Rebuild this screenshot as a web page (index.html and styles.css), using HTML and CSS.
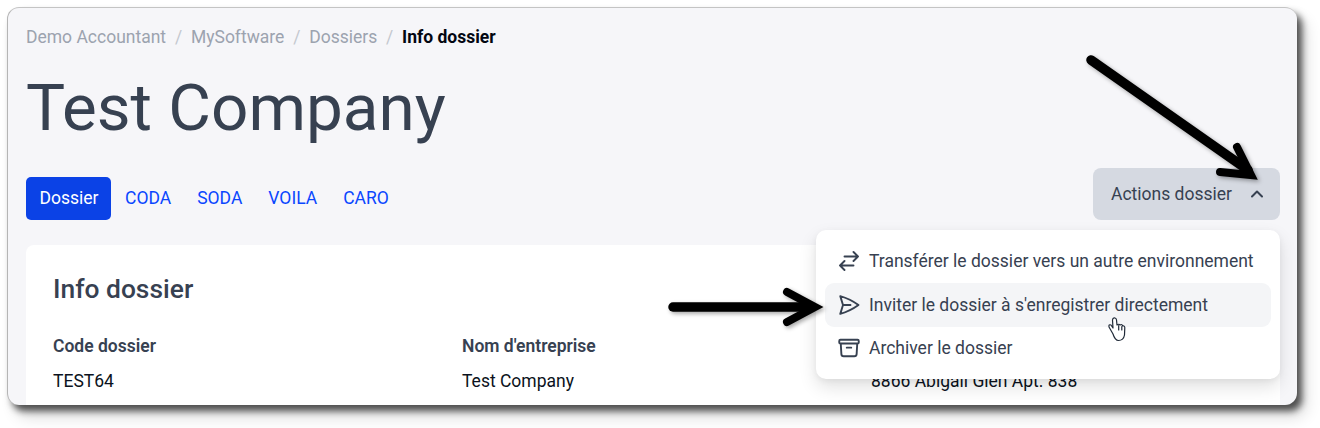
FILE: index.html
```html
<!DOCTYPE html>
<html lang="fr">
<head>
<meta charset="utf-8">
<title>Info dossier</title>
<link rel="stylesheet" href="styles.css">
</head>
<body>
<div class="window">
  <nav class="crumbs">
    <span>Demo Accountant</span><i>/</i><span>MySoftware</span><i>/</i><span>Dossiers</span><i>/</i><b>Info dossier</b>
  </nav>
  <h1 class="title">Test Company</h1>
  <div class="toolbar">
    <div class="tabs">
      <a class="tab active">Dossier</a><a class="tab">CODA</a><a class="tab">SODA</a><a class="tab">VOILA</a><a class="tab">CARO</a>
    </div>
    <button class="actions">Actions dossier
      <svg class="chev" viewBox="0 0 24 24"><path d="m4.5 15.75 7.5-7.5 7.5 7.5"/></svg>
    </button>
  </div>
  <section class="card">
    <h2>Info dossier</h2>
    <div class="grid">
      <div><h3>Code dossier</h3><p>TEST64</p></div>
      <div><h3>Nom d'entreprise</h3><p>Test Company</p></div>
      <div><h3></h3><p>8866 Abigail Glen Apt. 838</p></div>
    </div>
  </section>
  <div class="menu">
    <div class="item"><svg viewBox="0 0 24 24"><path d="M7.5 21 3 16.5m0 0L7.5 12M3 16.5h13.5m0-13.5L21 7.5m0 0L16.5 12M21 7.5H7.5"/></svg>Transférer le dossier vers un autre environnement</div>
    <div class="item hover"><svg viewBox="0 0 24 24"><path d="M6 12 3.269 3.125A59.769 59.769 0 0 1 21.485 12 59.768 59.768 0 0 1 3.27 20.875L5.999 12Zm0 0h7.5"/></svg>Inviter le dossier à s'enregistrer directement</div>
    <div class="item"><svg viewBox="0 0 24 24"><path d="m20.25 7.5-.625 10.632a2.25 2.25 0 0 1-2.247 2.118H6.622a2.25 2.25 0 0 1-2.247-2.118L3.75 7.5m6 4.125h4.5M3.375 7.5h17.25c.621 0 1.125-.504 1.125-1.125v-1.5c0-.621-.504-1.125-1.125-1.125H3.375c-.621 0-1.125.504-1.125 1.125v1.5c0 .621.504 1.125 1.125 1.125Z"/></svg>Archiver le dossier</div>
  </div>
</div>
<svg class="overlay" viewBox="0 0 1320 428">
  <g class="arrow">
    <path class="shaft" d="M1091 60 L1248 170"/>
    <path d="M1237 147 L1251 175 L1220 172"/>
    <path class="shaft" d="M673 307 L810 307"/>
    <path d="M787 292 L815 307 L787 322"/>
  </g>
  <path class="hand" d="M1113 334 L1109 327 Q1108.500 324 1111 325 L1113 328 L1112.500 320 Q1113 317.500 1115 318 Q1116.500 318.500 1116.500 320 L1117 325 Q1119 323.500 1120 325 Q1122 324 1122.800 326 Q1124.500 325.500 1124.800 327.500 L1124.500 335 Q1123.500 340.500 1118.500 340.500 Q1115 340.500 1113 334 M1118.700 325.500 V330 M1121.800 326.500 V330"/>
</svg>
</body>
</html>
```
FILE: styles.css
```css
* { box-sizing: border-box; }
html, body { margin: 0; height: 428px; overflow: hidden; background: #fff; }
body { padding: 7px 23px 24px 7px; font-family: Roboto, "Liberation Sans", sans-serif; }
.window {
  position: relative;
  width: 1290px;
  height: 398px;
  padding: 19px 17px 0 18px;
  background: #f6f6f9;
  border-radius: 12px;
  border-left: 1px solid #b5b5b5;
  border-top: 1px solid #c4c4c4;
  box-shadow: 5px 6px 7px rgba(0,0,0,.65), 9px 12px 16px rgba(0,0,0,.14);
  overflow: clip;
}
.crumbs { display: flex; align-items: center; height: 20px; font-size: 17.500px; color: #9ca3af; }
.crumbs i { font-style: normal; margin: 0 8.800px; color: #c4c8cf; }
.crumbs b { color: #030712; font-weight: 700; font-size: 17.500px; }
.title { margin: 20px 0 0; font-size: 65.600px; font-weight: 400; line-height: 82px; color: #374151; }
.toolbar { display: flex; justify-content: space-between; align-items: flex-start; height: 52px; margin-top: 19px; }
.tabs { display: flex; align-items: center; height: 43px; margin-top: 9px; }
.tab { display: block; padding: 0 13px; line-height: 43px; font-size: 17.500px; color: #0a46ff; }
.tab.active { width: 85px; margin-right: 1px; background: #0b42e6; color: #fff; border-radius: 5px; padding: 0 0 0 13.500px; }
.actions {
  display: flex; align-items: center; justify-content: space-between;
  width: 187px; height: 52px; padding: 0 15.500px 0 18px;
  border: 0; border-radius: 8px;
  background: #d5d9e1; color: #374151;
  font: 400 17.500px Roboto, sans-serif;
}
.chev { width: 16px; height: 16px; fill: none; stroke: #374151; stroke-width: 3; stroke-linecap: round; stroke-linejoin: round; }
.card { margin-top: 25px; height: 200px; padding: 27px 27px 0; background: #fff; border-radius: 8px 8px 0 0; }
.card h2 { margin: 0; font-size: 26.400px; line-height: 34px; font-weight: 500; color: #374151; }
.grid { display: grid; grid-template-columns: repeat(3, 409px); margin-top: 28px; }
.grid h3 { margin: 0; height: 24px; font-size: 17.500px; line-height: 24px; font-weight: 600; color: #374151; }
.grid p { margin: 11px 0 0; font-size: 17.500px; line-height: 24px; color: #0b1220; }
.menu {
  position: absolute; left: 808px; top: 222px;
  width: 464px; height: 149px; padding: 9.500px 9px 9px;
  background: #fff; border-radius: 10px;
  box-shadow: 0 8px 18px rgba(0,0,0,.12), 0 2px 6px rgba(0,0,0,.05);
}
.item { display: flex; align-items: center; gap: 8px; height: 43.500px; padding: 0 12px; font-size: 17.500px; color: #374151; border-radius: 9px; }
.item svg { width: 24px; height: 24px; fill: none; stroke: #374151; stroke-width: 1.900; stroke-linecap: round; stroke-linejoin: round; flex: none; }
.item.hover { background: #f4f5f7; }
.overlay { position: absolute; left: 0; top: 0; width: 1320px; height: 428px; pointer-events: none; }
.arrow path { fill: none; stroke: #000; stroke-width: 8px; stroke-linecap: round; stroke-linejoin: miter; }
.arrow .shaft { stroke-width: 9.500px; }
.arrow { filter: drop-shadow(2px 2px 2px rgba(0,0,0,.35)); }
.hand { fill: #fff; stroke: #1f2937; stroke-width: 1.200; stroke-linejoin: round; stroke-linecap: round; }
```
